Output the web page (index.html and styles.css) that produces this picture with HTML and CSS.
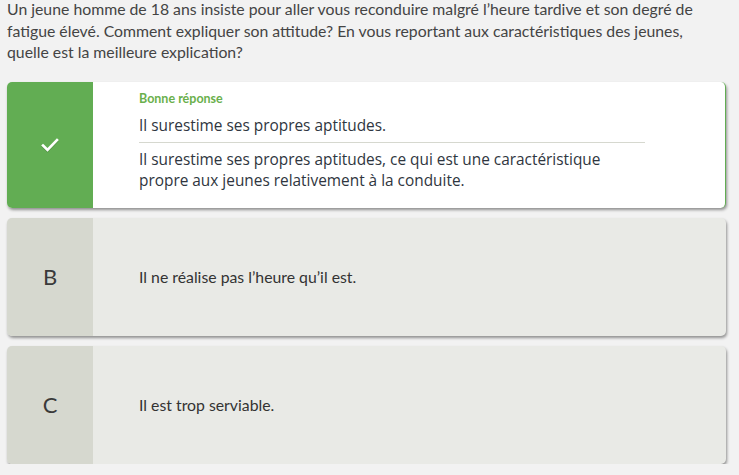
FILE: index.html
```html
<!DOCTYPE html>
<html lang="fr">
<head>
<meta charset="utf-8">
<title>Question</title>
<link rel="stylesheet" href="styles.css">
</head>
<body>
<main class="quiz">
  <p class="question">Un jeune homme de 18 ans insiste pour aller vous reconduire malgré l’heure tardive et son degré de fatigue élevé. Comment expliquer son attitude? En vous reportant aux caractéristiques des jeunes, quelle est la meilleure explication?</p>
  <div class="choices">
    <div class="choice correct">
      <div class="marker">
        <svg class="check" width="18" height="14" viewBox="0 0 18 14"><polyline points="2,7.5 6.5,12 16,2" fill="none" stroke="#fff" stroke-width="2.6" stroke-linecap="square"/></svg>
      </div>
      <div class="body">
        <div class="label">Bonne réponse</div>
        <div class="answer">Il surestime ses propres aptitudes.</div>
        <div class="explanation">Il surestime ses propres aptitudes, ce qui est une caractéristique propre aux jeunes relativement à la conduite.</div>
      </div>
    </div>
    <div class="choice">
      <div class="marker letter">B</div>
      <div class="body centered">Il ne réalise pas l’heure qu’il est.</div>
    </div>
    <div class="choice">
      <div class="marker letter">C</div>
      <div class="body centered">Il est trop serviable.</div>
    </div>
  </div>
</main>
</body>
</html>
```
FILE: styles.css
```css
html, body {
  margin: 0;
  padding: 0;
  background: #f2f2f2;
}
.quiz {
  padding: 0 13px 0 7px;
  font-family: Lato, "Liberation Sans", sans-serif;
}
.question {
  margin: -2px 0 0 0;
  font-size: 15.8px;
  line-height: 21.5px;
  color: #444;
}
.choices {
  margin-top: 19px;
  display: flex;
  flex-direction: column;
  gap: 10px;
}
.choice {
  display: flex;
  min-height: 118px;
  border-radius: 5px;
  background: #e9eae6;
  box-shadow: 1px 2px 3px rgba(0,0,0,0.4);
  overflow: hidden;
}
.choice.correct {
  background: #fff;
  min-height: 126px;
  border-right: 1px solid #62ad53;
}
.marker {
  width: 86px;
  flex: none;
  display: flex;
  align-items: center;
  justify-content: center;
  background: #d6d8cf;
}
.correct .marker {
  background: #62ad53;
}
.check {
  filter: drop-shadow(0 1px 0 rgba(0,0,0,0.15));
  margin-top: 1px;
}
.letter {
  font-size: 22px;
  color: #3a3a3a;
  padding-bottom: 1px;
}
.body {
  flex: 1;
  padding: 10px 80px 16px 46px;
  color: #333;
}
.body.centered {
  display: flex;
  align-items: center;
  padding-top: 0;
  padding-bottom: 0;
  font-size: 15.8px;
}
.label {
  font-size: 12.5px;
  font-weight: 700;
  line-height: 14px;
  color: #6ab04c;
}
.answer,
.explanation {
  font-family: "Open Sans", "DejaVu Sans", sans-serif;
  font-size: 15.4px;
  line-height: 21px;
  color: #2f3640;
}
.answer {
  margin-top: 9px;
  padding-bottom: 6px;
  border-bottom: 1px solid #d6d8cf;
}
.explanation {
  padding-top: 6px;
}
```
